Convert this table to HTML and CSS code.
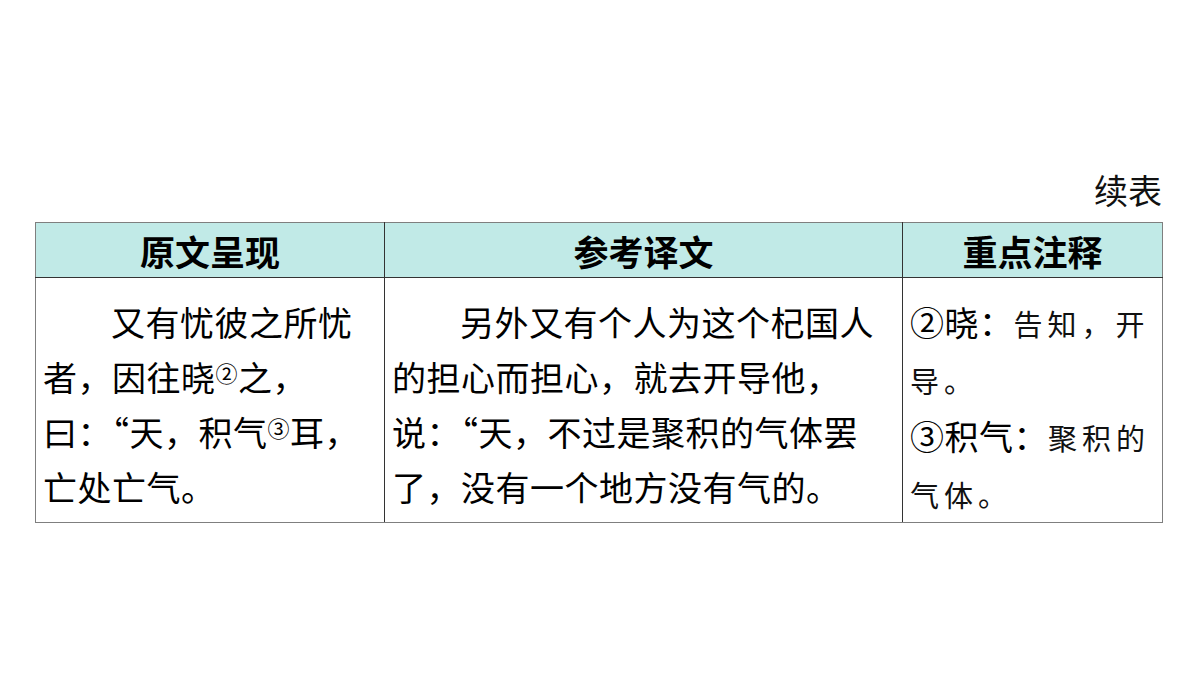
FILE: index.html
```html
<!DOCTYPE html>
<html lang="zh-CN">
<head>
<meta charset="utf-8">
<link rel="stylesheet" href="styles.css">
</head>
<body>
<div class="page">
  <div class="caption">续表</div>
  <table class="tbl">
    <colgroup>
      <col class="c1"><col class="c2"><col class="c3">
    </colgroup>
    <thead>
      <tr><th>原文呈现</th><th>参考译文</th><th>重点注释</th></tr>
    </thead>
    <tbody>
      <tr>
        <td><span class="ind"></span>又有忧彼之所忧<br>者，因往晓<span class="sup">②</span>之，<br>曰：“天，积气<span class="sup">③</span>耳，<br>亡处亡气。</td>
        <td><span class="ind"></span>另外又有个人为这个杞国人<br>的担心而担心，就去开导他，<br>说：“天，不过是聚积的气体罢<br>了，没有一个地方没有气的。</td>
        <td class="notes">②晓：<span class="kai">告知，开</span><br><span class="kai">导。</span><br>③积气：<span class="kai">聚积的</span><br><span class="kai">气体。</span></td>
      </tr>
    </tbody>
  </table>
</div>
</body>
</html>
```
FILE: styles.css
```css
html, body {
  margin: 0;
  padding: 0;
  background: #ffffff;
}
body {
  width: 1200px;
  height: 675px;
  overflow: hidden;
  font-family: "Noto Sans CJK SC", "Noto Sans", sans-serif;
  color: #000;
}
.page {
  padding: 168px 38px 0 35px;
  display: flex;
  flex-direction: column;
}
.caption {
  align-self: flex-end;
  font-size: 34px;
  line-height: 44px;
  margin-bottom: 10px;
  color: #111;
}
.tbl {
  border-collapse: collapse;
  table-layout: fixed;
  width: 1127px;
  border: 1px solid #7f7f7f;
}
.c1 { width: 349px; }
.c2 { width: 518px; }
.c3 { width: 260px; }
.tbl th {
  background: #c1eae7;
  font-size: 35px;
  font-weight: 700;
  height: 52px;
  padding: 2px 0 0 0;
  line-height: 50px;
  text-align: center;
  border: 1px solid #333;
  border-top-color: #7f7f7f;
}
.tbl td {
  vertical-align: top;
  font-size: 34px;
  letter-spacing: 0.5px;
  line-height: 55px;
  padding: 16px 6px 0 7px;
  border: 1px solid #333;
  border-bottom-color: #7f7f7f;
  white-space: nowrap;
}
.tbl th:first-child, .tbl td:first-child { border-left-color: #7f7f7f; }
.tbl th:last-child, .tbl td:last-child { border-right-color: #7f7f7f; }
.ind {
  display: inline-block;
  width: 68px;
}
.sup {
  font-size: 22px;
  vertical-align: 9px;
  line-height: 0;
}
.kai {
  font-size: 29px;
  font-weight: 400;
  letter-spacing: 5px;
  color: #111;
}
.notes {
  padding-left: 8px;
}
```
